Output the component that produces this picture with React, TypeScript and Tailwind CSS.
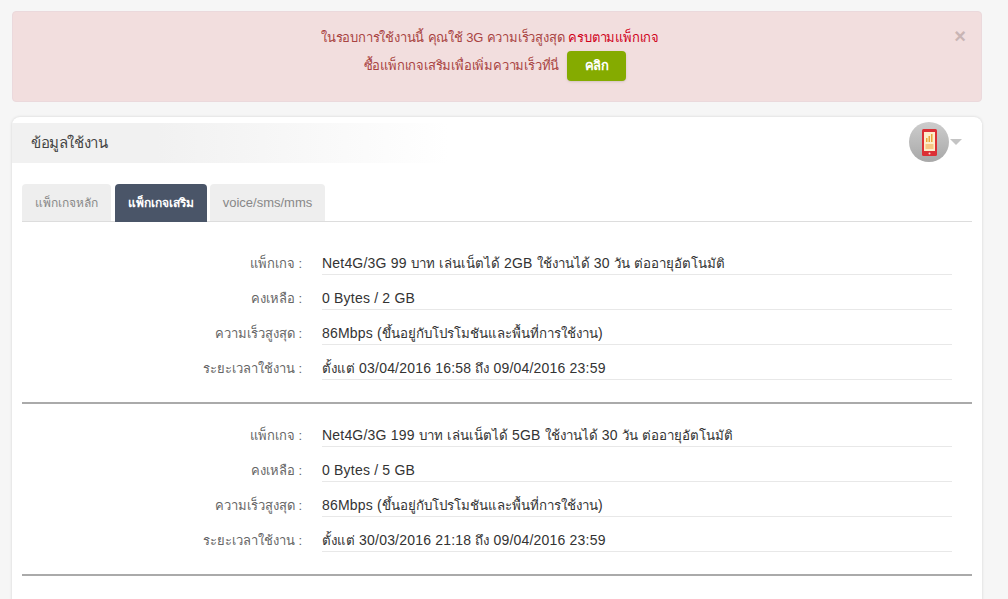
import React from "react";

const blocks = [
  [
    ["แพ็กเกจ :", "Net4G/3G 99 บาท เล่นเน็ตได้ 2GB ใช้งานได้ 30 วัน ต่ออายุอัตโนมัติ"],
    ["คงเหลือ :", "0 Bytes / 2 GB"],
    ["ความเร็วสูงสุด :", "86Mbps (ขึ้นอยู่กับโปรโมชันและพื้นที่การใช้งาน)"],
    ["ระยะเวลาใช้งาน :", "ตั้งแต่ 03/04/2016 16:58 ถึง 09/04/2016 23:59"],
  ],
  [
    ["แพ็กเกจ :", "Net4G/3G 199 บาท เล่นเน็ตได้ 5GB ใช้งานได้ 30 วัน ต่ออายุอัตโนมัติ"],
    ["คงเหลือ :", "0 Bytes / 5 GB"],
    ["ความเร็วสูงสุด :", "86Mbps (ขึ้นอยู่กับโปรโมชันและพื้นที่การใช้งาน)"],
    ["ระยะเวลาใช้งาน :", "ตั้งแต่ 30/03/2016 21:18 ถึง 09/04/2016 23:59"],
  ],
];

// thai comes out wider than the latin here, so it gets a smaller size
const Value = ({ text }: { text: string }) => (
  <>
    {text.split(/([\u0E00-\u0E7F]+)/).map((part, i) =>
      i % 2 === 1 ? (
        <span key={i} className="text-[13.3px] tracking-normal">
          {part}
        </span>
      ) : (
        <span key={i}>{part}</span>
      )
    )}
  </>
);

const App: React.FC = () => {
  return (
    <div className="h-[599px] overflow-hidden bg-[#f6f6f6] pt-[11px] pr-[26px] pl-3 font-['Liberation_Sans','Noto_Sans','DejaVu_Sans',sans-serif]">
      {/* alert */}
      <div className="relative flex h-[91px] flex-col items-center rounded border border-[#ebd9dc] bg-[#f2dede] pt-[13px] pr-1 text-[13px] tracking-[-0.2px] text-[#a94442]">
        <div className="mr-[10px] flex h-[26px] items-center gap-1">
          <span>ในรอบการใช้งานนี้ คุณใช้ 3G ความเร็วสูงสุด</span>
          <span className="text-[#d0021b]">ครบตามแพ็กเกจ</span>
        </div>
        <div className="flex items-center gap-2">
          <span>ซื้อแพ็กเกจเสริมเพื่อเพิ่มความเร็วที่นี่</span>
          <button className="h-[30px] w-[59px] rounded-sm bg-[#85ab00] text-[13px] font-bold text-white shadow-sm">
            คลิก
          </button>
        </div>
        <span className="absolute top-[14px] right-[15px] text-xl leading-5 font-bold tracking-normal text-[#c9b5b5]">×</span>
      </div>

      {/* card */}
      <div className="mt-[15px] h-[600px] rounded-lg bg-white pt-1.5 shadow-[0_0_3px_rgba(0,0,0,0.15)]">
        <div className="flex h-10 items-center justify-between bg-gradient-to-r from-[#f1f1f1] from-15% to-white to-45% pr-5 pl-[19px]">
          <span className="text-[15px] tracking-[-0.4px] text-[#444]">ข้อมูลใช้งาน</span>
          <div className="-mt-0.5 flex items-center gap-px">
            <div className="flex h-10 w-10 items-center justify-center rounded-full bg-gradient-to-b from-[#cdcdcd] to-[#a8a8a8]">
              <svg width="15" height="27" viewBox="0 0 15 27">
                <rect x="0" y="0" width="15" height="27" rx="1.5" fill="#dc2f34" />
                <rect x="2" y="3" width="11" height="19" fill="#fdeecb" />
                <rect x="4" y="9" width="1.5" height="4" fill="#e9a83b" />
                <rect x="6.5" y="7" width="1.5" height="6" fill="#e9a83b" />
                <rect x="9" y="5" width="1.5" height="8" fill="#e9a83b" />
                <rect x="3.5" y="15" width="8" height="5" fill="#f6c784" />
                <circle cx="7.5" cy="24.5" r="1" fill="#fbd5d5" />
              </svg>
            </div>
            <div className="h-0 w-0 border-x-[6px] border-t-[6px] border-x-transparent border-t-[#c4c4c4]" />
          </div>
        </div>

        <div className="px-2.5 pt-[21px]">
          <div className="flex h-[38px] border-b border-[#ddd] text-[13px]">
            <div className="flex h-[37px] w-[89px] items-center justify-center rounded-t-sm bg-[#eeeeee] text-xs text-[#888]">แพ็กเกจหลัก</div>
            <div className="ml-1 flex h-[38px] w-[92px] items-center justify-center rounded-t-sm bg-[#4a5568] text-xs font-bold text-white">แพ็กเกจเสริม</div>
            <div className="ml-[3px] flex h-[37px] w-[115px] items-center justify-center rounded-t-sm bg-[#eeeeee] text-[#888]">voice/sms/mms</div>
          </div>

          {blocks.map((rows, i) => (
            <div key={i} className={`flex flex-col border-b-2 border-[#aaaaaa] pb-[22px] ${i === 0 ? "pt-[18px]" : "pt-2"}`}>
              {rows.map(([label, value]) => (
                <div key={label} className="flex h-[35px] text-sm">
                  <div className="w-[280px] pt-[15px] text-right text-[13px] leading-[17px] text-[#666]">{label}</div>
                  <div className="ml-5 h-[35px] w-[630px] border-b border-[#e8e8e8] pt-[15px] leading-[17px] tracking-[0.2px] text-[#333]">
                    <Value text={value} />
                  </div>
                </div>
              ))}
            </div>
          ))}
        </div>
      </div>
    </div>
  );
};

export default App;
